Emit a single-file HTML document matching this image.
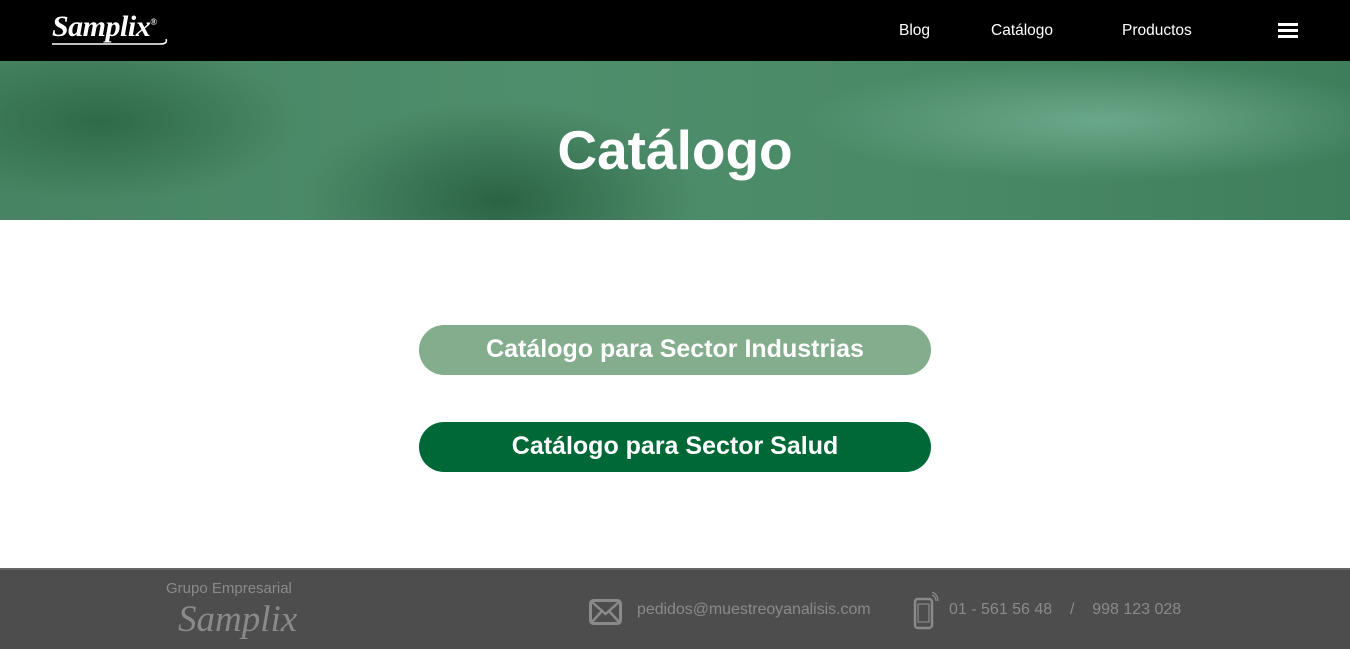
<!DOCTYPE html>
<html><head><meta charset="utf-8"><style>
*{margin:0;padding:0;box-sizing:border-box}
body{width:1350px;height:649px;overflow:hidden;font-family:"Liberation Sans",sans-serif;background:#fff;position:relative}
.nav{position:absolute;top:0;left:0;width:1350px;height:61px;background:#000}
.logo{position:absolute;left:52px;top:10px;color:#fff;font-family:"Liberation Serif",serif;font-style:italic;font-weight:bold;font-size:30px;letter-spacing:-0.5px}
.logo sup{font-size:9px;font-style:normal}
.nav a{position:absolute;top:22px;color:#fff;font-size:15.5px;text-decoration:none}
.burger{position:absolute;left:1278px;top:23px;width:20px}
.burger i{display:block;height:3px;background:#fff;margin-bottom:3px}
.hero{position:absolute;top:61px;left:0;width:1350px;height:159px;
background:radial-gradient(ellipse 200px 80px at 100px 60px,#2f6a48,transparent),radial-gradient(ellipse 300px 60px at 1100px 60px,#6aa88a,transparent),radial-gradient(ellipse 200px 100px at 500px 140px,#2a6344,transparent),linear-gradient(90deg,#468463,#4f8e6c 40%,#4a8966 70%,#3f7e5c)}
.hero h1{position:absolute;width:100%;text-align:center;top:57px;color:#fff;font-size:55px;font-weight:bold}
.btn{position:absolute;left:419px;width:512px;height:50px;border-radius:25px;color:#fff;font-size:25px;font-weight:bold;text-align:center;line-height:48px}
.foot{position:absolute;top:568px;left:0;width:1350px;height:81px;background:#4d4d4d;border-top:2px solid #666;color:#8a8a8a}
</style></head><body>
<div class="nav">
<div class="logo">Samplix<sup>®</sup></div>
<svg style="position:absolute;left:50px;top:38px" width="120" height="10"><path d="M2 6 L110 6 Q118 6 116 1" fill="none" stroke="#fff" stroke-width="1.5"/></svg>
<a style="left:899px">Blog</a><a style="left:991px">Catálogo</a><a style="left:1122px">Productos</a>
<div class="burger"><i></i><i></i><i></i></div>
</div>
<div class="hero"><h1>Catálogo</h1></div>
<div class="btn" style="top:325px;background:#83ad8d">Catálogo para Sector Industrias</div>
<div class="btn" style="top:422px;background:#006837">Catálogo para Sector Salud</div>
<div class="foot">
<div style="position:absolute;left:166px;top:10px;font-size:15px">Grupo Empresarial</div>
<div style="position:absolute;left:178px;top:28px;font-family:'Liberation Serif',serif;font-style:italic;font-size:37px">Samplix</div>
<svg style="position:absolute;left:589px;top:29px" width="33" height="26" viewBox="0 0 33 26"><rect x="1.5" y="1.5" width="30" height="23" rx="3" fill="none" stroke="#8a8a8a" stroke-width="3"/><path d="M3 3L16.5 15L30 3M3 23L13 12M30 23L20 12" fill="none" stroke="#8a8a8a" stroke-width="2.5"/></svg>
<div style="position:absolute;left:637px;top:31px;font-size:16px;letter-spacing:-0.05px">pedidos@muestreoyanalisis.com</div>
<svg style="position:absolute;left:913px;top:22px" width="26" height="38" viewBox="0 0 26 38"><rect x="2" y="7" width="17" height="29" rx="3" fill="none" stroke="#8a8a8a" stroke-width="2.5"/><rect x="5" y="12" width="11" height="18" fill="none" stroke="#8a8a8a" stroke-width="1.2"/><path d="M19 3a6 6 0 0 1 4 6M19 0a9 9 0 0 1 6 9" fill="none" stroke="#8a8a8a" stroke-width="1.3"/></svg>
<div style="position:absolute;left:949px;top:31px;font-size:16px;white-space:pre">01 - 561 56 48    /    998 123 028</div>
</div>
</body></html>
